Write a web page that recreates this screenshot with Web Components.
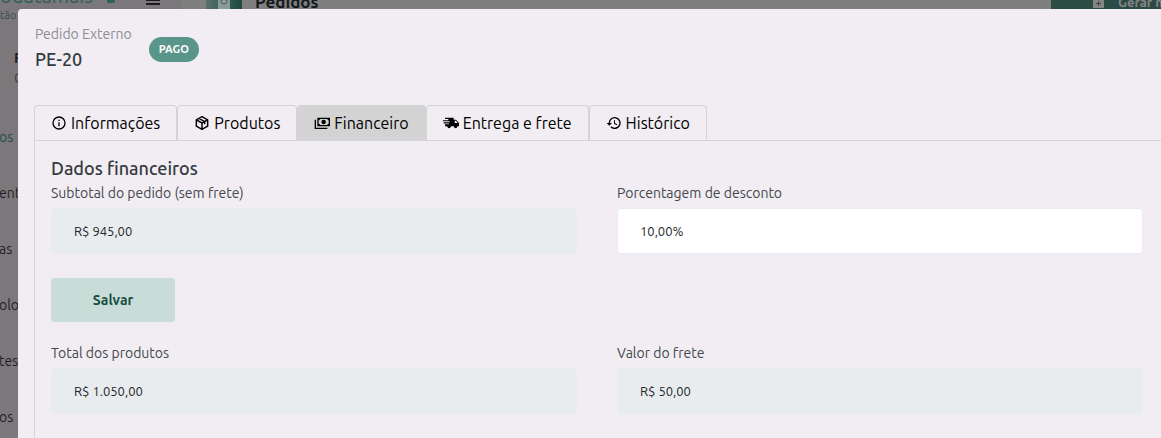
<!DOCTYPE html>
<html lang="pt-BR">
<head>
<meta charset="utf-8">
<title>Pedidos</title>
<style>
  html, body { height: 100%; }
  body {
    margin: 0;
    overflow: hidden;
    font-family: Ubuntu, "Noto Sans", sans-serif;
    font-size: 14px;
    color: #343a40;
    background: #807f80;
  }
</style>
</head>
<body>
<app-shell>
  <side-nav slot="nav"></side-nav>
  <page-header slot="header" label="Pedidos" action="Gerar n"></page-header>
</app-shell>

<order-modal label="Pedido Externo" code="PE-20" status="PAGO">
  <tab-bar slot="tabs">
    <tab-item icon="info">Informações</tab-item>
    <tab-item icon="box">Produtos</tab-item>
    <tab-item icon="cash" active>Financeiro</tab-item>
    <tab-item icon="truck">Entrega e frete</tab-item>
    <tab-item icon="history">Histórico</tab-item>
  </tab-bar>
  <form-panel label="Dados financeiros">
    <form-field label="Subtotal do pedido (sem frete)" value="R$ 945,00" readonly></form-field>
    <form-field label="Porcentagem de desconto" value="10,00%"></form-field>
    <save-button>Salvar</save-button>
    <form-field label="Total dos produtos" value="R$ 1.050,00" readonly></form-field>
    <form-field label="Valor do frete" value="R$ 50,00" readonly></form-field>
  </form-panel>
</order-modal>

<script>
const icons = {
  info: `<circle cx="12" cy="12" r="9" fill="none" stroke="currentColor" stroke-width="2"/><path d="M11 11h2v6h-2zM11 7h2v2h-2z"/>`,
  box: `<path fill="none" stroke="currentColor" stroke-width="2.2" stroke-linejoin="round" d="M12 2.5l8.5 4.7v9.6L12 21.5l-8.5-4.7V7.2zM3.5 7.2L12 12l8.5-4.8M12 12v9.5M7.5 5l8.5 4.8v4"/>`,
  cash: `<path d="M5 4h19v13H5zm2 4v5a2 2 0 0 1 2 2h11a2 2 0 0 1 2-2V8a2 2 0 0 1-2-2H9a2 2 0 0 1-2 2z" fill-rule="evenodd"/><circle cx="14.5" cy="10.5" r="3.3"/><path d="M1 7h2v12h17v2H1z"/>`,
  truck: `<path d="M3 4h13v3h3.5L24 12v5h-2.200a3 3 0 0 1-5.800 0h-4a3 3 0 0 1-5.800 0H3v-3h6v-1.300H1V11h9V9.500H0V7.700h8V6H3zM17.500 8.500V12H22l-2.600-3.500z"/><circle cx="9.1" cy="17.5" r="2.2"/><circle cx="18.9" cy="17.5" r="2.2"/>`,
  history: `<path d="M13 3a9 9 0 0 0-9 9H1l4 4 4-4H6a7 7 0 1 1 2.060 4.940l-1.420 1.420A9 9 0 1 0 13 3zm-1 5v5l4.250 2.520.770-1.280-3.520-2.090V8z"/>`
};

class AppShell extends HTMLElement {
  constructor() {
    super();
    this.attachShadow({ mode: "open" }).innerHTML = /*html*/ `
      <style>
        :host { display: grid; grid-template-columns: 182px 1fr; height: 100%; overflow: hidden; }
      </style>
      <slot name="nav"></slot>
      <slot name="header"></slot>
    `;
  }
}
customElements.define("app-shell", AppShell);

class SideNav extends HTMLElement {
  constructor() {
    super();
    this.attachShadow({ mode: "open" }).innerHTML = /*html*/ `
      <style>
        :host { display: block; background: #7b777a; color: #1e2229; overflow: hidden; }
        .brand { display: flex; align-items: center; height: 10px; padding-right: 22px; }
        .brand b { font-weight: 400; font-size: 20px; line-height: 24px; color: #2e6158; margin-top: -18px; }
        .dot { width: 8px; height: 8px; margin: -12px auto 0 14px; border-radius: 2px; background: #2e6158; }
        .menu { display: grid; gap: 2px; width: 14px; margin-top: -10px; }
        .menu i { height: 2px; background: #1a1c20; }
        small { display: block; font-size: 11px; line-height: 10px; color: #2e4f49; }
        .user { display: grid; padding: 28px 0 21px 14px; line-height: 20px; }
        .user span { color: #3d4046; }
        nav { margin-left: -1px; }
        a { display: flex; align-items: center; height: 56px; line-height: 20px; color: inherit; text-decoration: none; }
        a.current { color: #245045; }
      </style>
      <div class="brand"><b>odatamais</b><span class="dot"></span><span class="menu"><i></i><i></i><i></i></span></div>
      <small>tão</small>
      <div class="user"><b>R</b><span>C</span></div>
      <nav>
        <a class="current" href="#">os</a>
        <a href="#">ent</a>
        <a href="#">as</a>
        <a href="#">olo</a>
        <a href="#">tes</a>
        <a href="#">os</a>
      </nav>
    `;
  }
}
customElements.define("side-nav", SideNav);

class PageHeader extends HTMLElement {
  constructor() {
    super();
    this.attachShadow({ mode: "open" }).innerHTML = /*html*/ `
      <style>
        :host { display: flex; align-items: center; height: 4px; padding-left: 24px; color: #16191c; }
        .badge { display: flex; justify-content: center; width: 36px; height: 26px; background: linear-gradient(90deg, #57726c, #1d493e); }
        .badge svg { width: 12px; height: 26px; background: #8b9a97; }
        h1 { margin: 0 auto 0 13px; font-size: 17px; line-height: 24px; font-weight: 700; }
        button { display: flex; align-items: center; gap: 14px; width: 110px; height: 24px; padding: 0 0 0 42px; border: 0; border-radius: 4px 0 0 4px; background: #2c4b44; color: #858585; font: 700 13px/18px Ubuntu, "Noto Sans", sans-serif; white-space: nowrap; overflow: hidden; }
        button svg { flex: none; width: 11px; height: 11px; }
      </style>
      <span class="badge"><svg viewBox="0 0 12 26"><circle cx="6" cy="12" r="3" fill="none" stroke="#3d5f57"/></svg></span>
      <h1>${this.getAttribute("label")}</h1>
      <button type="button">
        <svg viewBox="0 0 11 11"><path fill="#858585" d="M0 0h11v11H0z"/><path stroke="#2c4b44" d="M5.5 4v5M3 6.500h5"/></svg>
        ${this.getAttribute("action")}
      </button>
    `;
  }
}
customElements.define("page-header", PageHeader);

class OrderModal extends HTMLElement {
  constructor() {
    super();
    this.attachShadow({ mode: "open" }).innerHTML = /*html*/ `
      <style>
        :host { position: absolute; inset: 9px 0 0 18px; display: flex; flex-direction: column; box-sizing: border-box; padding: 12px 0 0 16px; background: #f1edf2; border-radius: 4px 0 0 0; overflow: hidden; }
        header { display: flex; align-items: center; gap: 17px; padding-left: 1px; margin-bottom: 34px; }
        .label { font-size: 14px; line-height: 26px; color: #8e8e92; }
        h2 { margin: 0; font-size: 18px; line-height: 24px; font-weight: 500; }
        .status { padding: 0 10px; margin-top: 6px; border-radius: 13px; background: #5a9589; color: #fff; font-size: 11px; line-height: 25px; font-weight: 700; }
      </style>
      <header>
        <div>
          <div class="label">${this.getAttribute("label")}</div>
          <h2>${this.getAttribute("code")}</h2>
        </div>
        <span class="status">${this.getAttribute("status")}</span>
      </header>
      <slot name="tabs"></slot>
      <slot></slot>
    `;
  }
}
customElements.define("order-modal", OrderModal);

class TabBar extends HTMLElement {
  constructor() {
    super();
    this.attachShadow({ mode: "open" }).innerHTML = /*html*/ `
      <style>
        :host { display: flex; border-bottom: 1px solid #d3d3d6; }
      </style>
      <slot></slot>
    `;
  }
}
customElements.define("tab-bar", TabBar);

class TabItem extends HTMLElement {
  constructor() {
    super();
    this.attachShadow({ mode: "open" }).innerHTML = /*html*/ `
      <style>
        :host { display: block; }
        button { display: flex; align-items: center; gap: 4px; height: 35px; padding: 0 16px; border: 1px solid #d3d3d6; border-bottom: 0; border-radius: 4px 4px 0 0; background: none; color: #000; font: 400 16px/24px Ubuntu, "Noto Sans", sans-serif; }
        :host([active]) button { background: #d3d3d3; }
        svg { width: 16px; height: 16px; fill: currentColor; }
      </style>
      <button type="button"><svg viewBox="0 0 24 24" aria-hidden="true">${icons[this.getAttribute("icon")]}</svg><slot></slot></button>
    `;
  }
}
customElements.define("tab-item", TabItem);

class FormPanel extends HTMLElement {
  constructor() {
    super();
    this.attachShadow({ mode: "open" }).innerHTML = /*html*/ `
      <style>
        :host { display: block; flex: 1; padding: 14px 18px 0 16px; border-left: 1px solid #d3d3d6; }
        h3 { margin: 0; font-size: 18px; line-height: 26px; font-weight: 500; }
        .grid { display: grid; grid-template-columns: 1fr 1fr; column-gap: 40px; row-gap: 25px; }
        ::slotted(save-button) { grid-column: 1 / -1; margin-bottom: -6px; }
      </style>
      <h3>${this.getAttribute("label")}</h3>
      <div class="grid"><slot></slot></div>
    `;
  }
}
customElements.define("form-panel", FormPanel);

class FormField extends HTMLElement {
  constructor() {
    super();
    const readonly = this.hasAttribute("readonly") ? "readonly" : "";
    this.attachShadow({ mode: "open" }).innerHTML = /*html*/ `
      <style>
        :host { display: block; min-width: 0; }
        label { display: block; margin-bottom: 3px; font-size: 14px; line-height: 24px; color: #43484d; }
        input { display: block; box-sizing: border-box; width: 100%; height: 46px; margin-bottom: -1px; padding: 0 22px; border: 1px solid #e8ecf0; border-radius: 4px; background: #fff; color: #24282c; font: 400 13px/20px Ubuntu, "Noto Sans", sans-serif; outline: 0; }
        input:read-only { background: #e8ecef; }
      </style>
      <label for="value">${this.getAttribute("label")}</label>
      <input id="value" type="text" value="${this.getAttribute("value")}" ${readonly}>
    `;
  }
}
customElements.define("form-field", FormField);

class SaveButton extends HTMLElement {
  constructor() {
    super();
    this.attachShadow({ mode: "open" }).innerHTML = /*html*/ `
      <style>
        :host { display: block; }
        button { display: block; height: 44px; min-width: 124px; padding: 0 40px; border: 0; border-radius: 3px; background: #c8ddd8; color: #174f44; font: 700 14px/20px Ubuntu, "Noto Sans", sans-serif; }
      </style>
      <button type="button"><slot></slot></button>
    `;
  }
}
customElements.define("save-button", SaveButton);
</script>
</body>
</html>
